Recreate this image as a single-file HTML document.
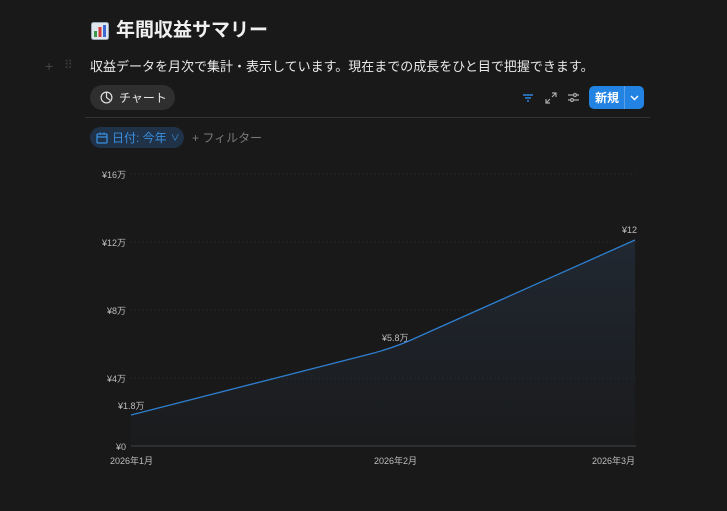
<!DOCTYPE html>
<html><head><meta charset="utf-8"><style>
*{margin:0;padding:0;box-sizing:border-box}
body{width:727px;height:511px;background:#191919;font-family:"Liberation Sans","Noto Sans CJK JP",sans-serif;color:#e6e6e6;position:relative;overflow:hidden}
.abs{position:absolute}
</style></head><body>
<div class="abs" style="left:91px;top:18px;font-size:19px;font-weight:bold;color:#f0f0f0;display:flex;align-items:center;gap:7px;line-height:26px">
<svg width="18" height="18" viewBox="0 0 18 18"><rect x="0.5" y="0.5" width="17" height="17" rx="2" fill="#dfe6ee" stroke="#9aa6b2"/><rect x="3" y="9" width="3" height="6" fill="#3a9a4a"/><rect x="7.5" y="5" width="3" height="10" fill="#d23a3a"/><rect x="12" y="3" width="3" height="12" fill="#3a6ad2"/></svg>
<span>年間収益サマリー</span></div>
<div class="abs" style="left:45px;top:58px;font-size:14px;color:#444">+</div>
<div class="abs" style="left:64px;top:58px;font-size:12px;color:#3c3c3c;letter-spacing:-1px">⠿</div>
<div class="abs" style="left:90px;top:58px;font-size:13px;color:#e8e8e8;line-height:18px">収益データを月次で集計・表示しています。現在までの成長をひと目で把握できます。</div>
<div class="abs" style="left:90px;top:85px;width:85px;height:25px;border-radius:13px;background:#2f2f2f;display:flex;align-items:center;padding-left:10px;gap:6px;font-size:12px;color:#e6e6e6">
<svg width="13" height="13" viewBox="0 0 14 14" fill="none" stroke="#ddd" stroke-width="1.3"><circle cx="7" cy="7" r="5.8"/><path d="M7 1.2V7l4 3"/></svg>チャート</div>
<svg class="abs" style="left:522px;top:92px" width="12" height="12" viewBox="0 0 12 12" stroke="#2e86de" stroke-width="1.4"><path d="M1 3h10M3 6h6M5 9h2"/></svg>
<svg class="abs" style="left:545px;top:92px" width="12" height="12" viewBox="0 0 12 12" fill="none" stroke="#aaa" stroke-width="1.2"><path d="M7 1h4v4M11 1L7 5M5 11H1V7M1 11l4-4"/></svg>
<svg class="abs" style="left:567px;top:91px" width="13" height="13" viewBox="0 0 13 13" fill="none" stroke="#aaa" stroke-width="1.2"><path d="M1 4h11M1 9h11"/><circle cx="8" cy="4" r="1.5" fill="#191919"/><circle cx="5" cy="9" r="1.5" fill="#191919"/></svg>
<div class="abs" style="left:589px;top:86px;width:55px;height:23px;border-radius:5px;background:#2383e2;display:flex;align-items:center;font-size:12px;color:#fff;font-weight:bold">
<span style="padding-left:6px;width:35px">新規</span><span style="border-left:1px solid #5aa0ea;height:23px;width:20px;display:flex;align-items:center;justify-content:center"><svg width="9" height="6" viewBox="0 0 9 6" fill="none" stroke="#fff" stroke-width="1.4"><path d="M1 1l3.5 3.5L8 1"/></svg></span></div>
<div class="abs" style="left:85px;top:117px;width:565px;height:1px;background:#333"></div>
<div class="abs" style="left:90px;top:127px;width:94px;height:21px;border-radius:11px;background:#1f3247;display:flex;align-items:center;padding-left:6px;gap:4px;font-size:12px;color:#3b8fe0">
<svg width="12" height="12" viewBox="0 0 12 12" fill="none" stroke="#3b8fe0" stroke-width="1.3"><rect x="1" y="2" width="10" height="9" rx="1"/><path d="M1 5h10M4 0.5v2M8 0.5v2"/></svg>日付: 今年 <span style="font-size:9px">∨</span></div>
<div class="abs" style="left:192px;top:129px;font-size:12px;color:#7a7a7a">+ フィルター</div>
<svg class="abs" style="left:0;top:0" width="727" height="511" font-family="Liberation Sans,Noto Sans CJK JP,sans-serif" font-size="9">
<defs><linearGradient id="g" x1="0" y1="0" x2="0" y2="1"><stop offset="0" stop-color="#2a3a50" stop-opacity="0.45"/><stop offset="1" stop-color="#2a3a50" stop-opacity="0.05"/></linearGradient></defs>
<g stroke="#2c2c2c" stroke-dasharray="1 3"><path d="M131 174H636M131 242H636M131 310H636M131 378H636"/></g>
<path d="M131 446H636" stroke="#444"/>
<path d="M131 415 L370 354 Q397 347 420 336 L635 240 L635 446 L131 446Z" fill="url(#g)"/>
<path d="M131 415 L370 354 Q397 347 420 336 L635 240" fill="none" stroke="#2e7fd0" stroke-width="1.3"/>
<g fill="#bdbdbd" text-anchor="end"><text x="126" y="178">¥16万</text><text x="126" y="246">¥12万</text><text x="126" y="314">¥8万</text><text x="126" y="382">¥4万</text><text x="126" y="450">¥0</text></g>
<g fill="#bdbdbd"><text x="118" y="409">¥1.8万</text><text x="382" y="341">¥5.8万</text><text x="622" y="233">¥12万</text>
<text x="110" y="464">2026年1月</text><text x="374" y="464">2026年2月</text><text x="592" y="464">2026年3月</text></g>
<rect x="637" y="220" width="20" height="20" fill="#191919"/>
</svg>
</body></html>
